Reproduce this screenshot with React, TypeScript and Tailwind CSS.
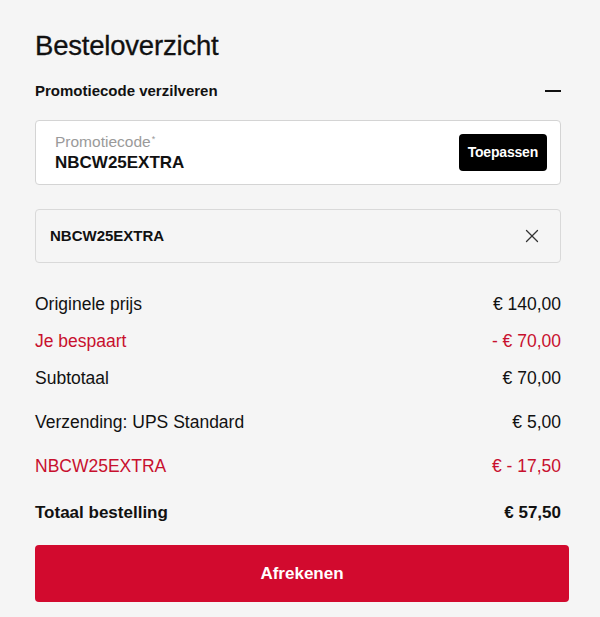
import { X } from 'lucide-react';

const rows = [
  { label: 'Originele prijs', value: '€ 140,00', red: false, mt: '' },
  { label: 'Je bespaart', value: '- € 70,00', red: true, mt: '' },
  { label: 'Subtotaal', value: '€ 70,00', red: false, mt: '' },
  { label: 'Verzending: UPS Standard', value: '€ 5,00', red: false, mt: 'mt-[7px]' },
  { label: 'NBCW25EXTRA', value: '€ - 17,50', red: true, mt: 'mt-[7px]' },
];

export default function App() {
  return (
    <div
      className="min-h-[617px] w-[600px] bg-[#f5f5f5] pl-[35px] pr-[39px] pt-[30px] text-[#111]"
      style={{ fontFamily: '"Liberation Sans", Arial, sans-serif' }}
    >
      <h2 className="h-[32px] text-[27.5px] leading-[32px] tracking-[-0.2px] [-webkit-text-stroke:0.3px_#111]">
        Besteloverzicht
      </h2>

      <div className="mt-[17px] flex h-[24px] w-[526px] items-center justify-between">
        <span className="text-[15px] font-bold">Promotiecode verzilveren</span>
        <span className="h-[2px] w-[16px] bg-[#111]" />
      </div>

      <div className="mt-[17px] flex h-[65px] w-[526px] items-center justify-between rounded-[4px] border border-[#d4d4d4] bg-white pl-[19px] pr-[13px]">
        <div className="flex flex-col">
          <span className="text-[15.5px] leading-[18px] text-[#9a9a9a]">
            Promotiecode<sup className="ml-[1px] text-[9px]">*</sup>
          </span>
          <span className="mt-[2px] text-[17px] font-bold leading-[20px]">NBCW25EXTRA</span>
        </div>
        <button className="h-[37px] rounded-[4px] bg-black px-[9px] text-[14px] font-bold tracking-[-0.2px] text-white">
          Toepassen
        </button>
      </div>

      <div className="mt-[24px] flex h-[54px] w-[526px] items-center justify-between rounded-[4px] border border-[#d9d9d9] bg-[#f5f5f5] pl-[14px] pr-[17px]">
        <span className="text-[15px] font-bold">NBCW25EXTRA</span>
        <X className="h-[22px] w-[22px] text-[#333]" strokeWidth={1.4} />
      </div>

      <div className="mt-[23px] w-[526px]">
        {rows.map((row) => (
          <div
            key={row.label}
            className={`flex h-[37px] items-center justify-between text-[17.5px] ${row.mt} ${row.red ? 'text-[#c8102e]' : ''}`}
          >
            <span>{row.label}</span>
            <span>{row.value}</span>
          </div>
        ))}
        <div className="mt-[9px] flex h-[37px] items-center justify-between text-[17px] font-bold">
          <span>Totaal bestelling</span>
          <span>€ 57,50</span>
        </div>
      </div>

      <button className="mt-[14px] h-[57px] w-[534px] rounded-[4px] bg-[#d20a2e] text-[17px] font-bold text-white">
        Afrekenen
      </button>
    </div>
  );
}
